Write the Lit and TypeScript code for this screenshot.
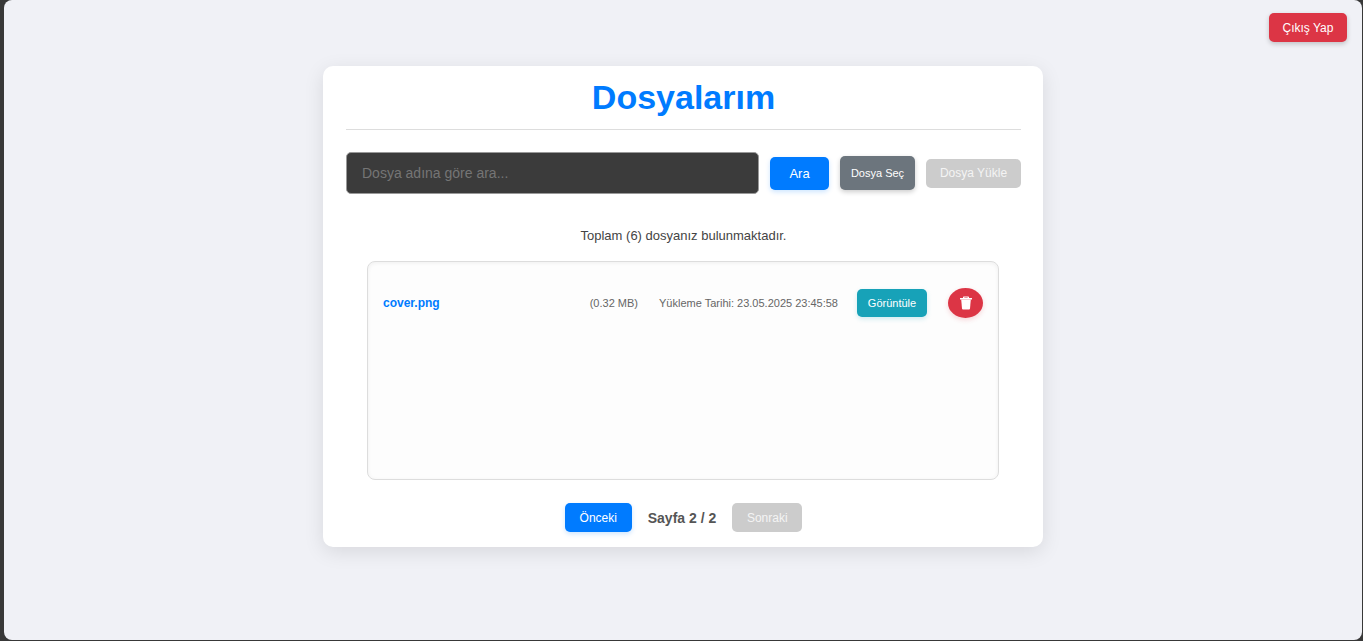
import { LitElement, html, css } from "lit";
import { customElement, property, state } from "lit/decorators.js";

interface StoredFile {
  name: string;
  size: string;
  uploaded: string;
}

@customElement("file-row")
class FileRow extends LitElement {
  @property({ attribute: false }) file!: StoredFile;

  static styles = css`
    :host {
      display: block;
    }
    .row {
      display: flex;
      align-items: center;
      gap: 19px;
      padding: 11px 15px;
    }
    .group {
      display: flex;
      align-items: center;
      gap: 21px;
    }
    .name {
      flex: 1;
      color: #007bff;
      font-size: 12px;
      font-weight: 700;
      text-decoration: none;
    }
    .meta {
      color: #666;
      font-size: 11px;
      white-space: nowrap;
    }
    button {
      border: 0;
      color: #fff;
      font-family: inherit;
      cursor: pointer;
    }
    .view {
      height: 28px;
      width: 70px;
      padding: 0;
      border-radius: 5px;
      background: #17a2b8;
      font-size: 11px;
      box-shadow: 0 2px 5px rgba(23, 162, 184, 0.2);
    }
    .delete {
      display: grid;
      place-items: center;
      width: 35px;
      height: 30px;
      padding: 0;
      border-radius: 50%;
      background: #dc3545;
      box-shadow: 0 2px 5px rgba(220, 53, 69, 0.2);
    }
  `;

  render() {
    return html`
      <div class="row">
        <a class="name" href="#">${this.file.name}</a>
        <div class="group">
          <span class="meta">(${this.file.size})</span>
          <span class="meta">Yükleme Tarihi: ${this.file.uploaded}</span>
        </div>
        <div class="group">
          <button class="view" type="button">Görüntüle</button>
          <button class="delete" type="button" aria-label="Sil">
            <svg width="12" height="14" viewBox="0 0 12 14" fill="#fff" aria-hidden="true">
              <path fill-rule="evenodd" d="M3 2V1.300Q3 .5 3.800 .5H8.200Q9 .5 9 1.300V2h3v1.600H0V2zM4.300 2h3.400v-.5H4.300z" />
              <path d="M1.200 3.600h9.600L10 12.500q-.1.900-1 .9H3q-.9 0-1-.9z" />
            </svg>
          </button>
        </div>
      </div>
    `;
  }
}

@customElement("app-root")
class AppRoot extends LitElement {
  @state() private files: StoredFile[] = [
    { name: "cover.png", size: "0.32 MB", uploaded: "23.05.2025 23:45:58" },
  ];
  @state() private total = 6;
  @state() private page = 2;
  @state() private pages = 2;

  static styles = css`
    :host {
      display: flex;
      box-sizing: border-box;
      min-height: 100vh;
      padding: 0 1px 1px 4px;
      background: #383838;
      font-family: Arial, "Liberation Sans", sans-serif;
    }
    * {
      box-sizing: border-box;
    }
    .page {
      flex: 1;
      border-radius: 8px;
      background: #f0f1f6;
      padding: 13px 15px;
    }
    .top {
      display: flex;
      justify-content: flex-end;
      margin-bottom: 24px;
    }
    button {
      height: 29px;
      padding: 0;
      border: 0;
      border-radius: 5px;
      color: #fff;
      font-family: inherit;
      font-size: 12px;
      cursor: pointer;
    }
    button:disabled {
      background: #ccc;
      color: #f4f4f4;
      box-shadow: none;
      cursor: default;
    }
    .logout {
      width: 78px;
      background: #dc3545;
      box-shadow: 0 2px 5px rgba(0, 0, 0, 0.2);
    }
    .card {
      max-width: 720px;
      margin: 0 auto;
      padding: 11px 22px 15px 23px;
      border-radius: 10px;
      background: #fff;
      box-shadow: 0 5px 20px rgba(0, 0, 0, 0.1);
    }
    h1 {
      margin: 0 0 22px;
      padding-bottom: 11px;
      border-bottom: 1px solid #ddd;
      color: #007bff;
      font-size: 34px;
      line-height: 41px;
      text-align: center;
    }
    .tools {
      display: flex;
      align-items: center;
      gap: 11px;
    }
    .search {
      flex: 1;
      min-width: 0;
      height: 42px;
      padding: 0 15px;
      border: 1px solid #999;
      border-radius: 5px;
      background: #3b3b3b;
      color: #fff;
      font-family: inherit;
      font-size: 14px;
    }
    .search::placeholder {
      color: #757575;
      opacity: 1;
    }
    .find {
      width: 59px;
      height: 33px;
      background: #007bff;
      font-size: 13px;
      box-shadow: 0 2px 5px rgba(0, 123, 255, 0.2);
    }
    .pick {
      width: 75px;
      height: 34px;
      background: #6c757d;
      font-size: 11px;
      box-shadow: 0 2px 5px rgba(0, 0, 0, 0.2);
    }
    .upload {
      width: 95px;
    }
    .count {
      margin: 34px 0 18px;
      color: #444;
      font-size: 13px;
      line-height: 15px;
      text-align: center;
    }
    .list {
      min-height: 219px;
      margin: 0 22px 23px 21px;
      padding: 15px 0;
      border: 1px solid #ddd;
      border-radius: 8px;
      background: #fdfdfd;
      box-shadow: inset 0 1px 4px rgba(0, 0, 0, 0.06);
    }
    .pager {
      display: flex;
      justify-content: center;
      align-items: center;
      gap: 16px;
      color: #555;
      font-size: 14px;
      line-height: 16px;
      font-weight: 700;
    }
    .prev {
      width: 67px;
      background: #007bff;
      box-shadow: 0 2px 5px rgba(0, 123, 255, 0.2);
    }
    .next {
      width: 70px;
    }
  `;

  render() {
    return html`
      <div class="page">
        <header class="top">
          <button class="logout" type="button">Çıkış Yap</button>
        </header>
        <main class="card">
          <h1>Dosyalarım</h1>
          <form class="tools" @submit=${(e: Event) => e.preventDefault()}>
            <input class="search" type="text" aria-label="Dosya ara" placeholder="Dosya adına göre ara..." />
            <button class="find" type="submit">Ara</button>
            <button class="pick" type="button">Dosya Seç</button>
            <button class="upload" type="button" disabled>Dosya Yükle</button>
          </form>
          <p class="count">Toplam (${this.total}) dosyanız bulunmaktadır.</p>
          <section class="list">
            ${this.files.map((f) => html`<file-row .file=${f}></file-row>`)}
          </section>
          <nav class="pager">
            <button class="prev" type="button" ?disabled=${this.page <= 1}>Önceki</button>
            <span>Sayfa ${this.page} / ${this.pages}</span>
            <button class="next" type="button" ?disabled=${this.page >= this.pages}>Sonraki</button>
          </nav>
        </main>
      </div>
    `;
  }
}
